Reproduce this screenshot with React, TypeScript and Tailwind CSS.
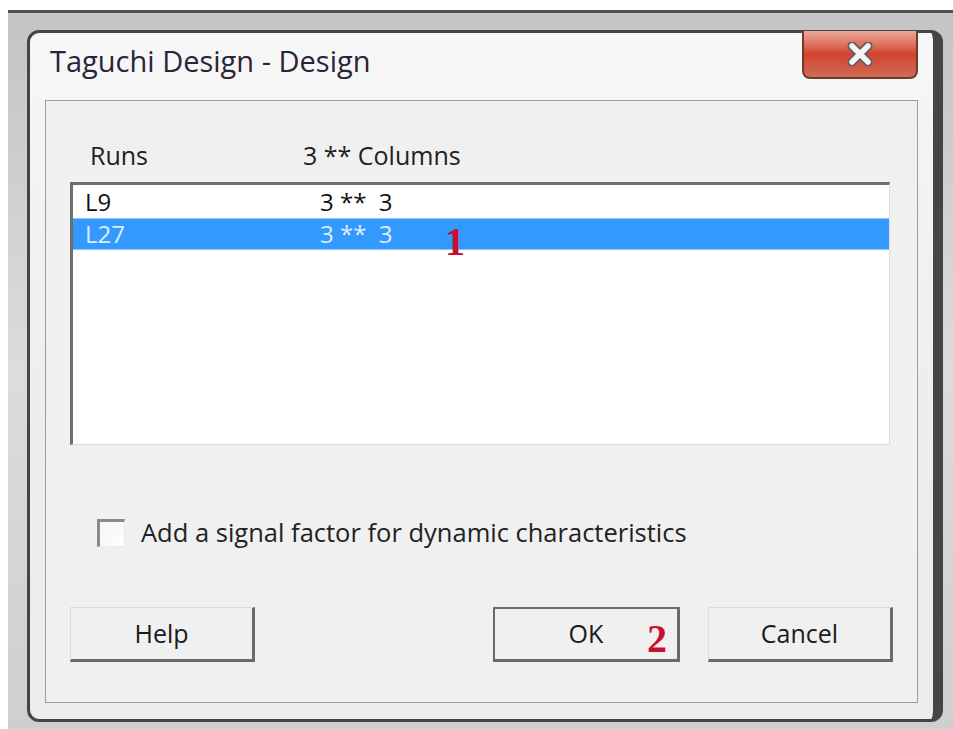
import React from "react";

// Minitab-style "Taguchi Design - Design" dialog, Windows 7 classic look

const rows = [
  { runs: "L9", columns: "3 **  3", selected: false },
  { runs: "L27", columns: "3 **  3", selected: true },
];

const marker = { fontFamily: '"Liberation Serif", serif' };

function CloseButton() {
  return (
    <div className="absolute -top-[2px] right-[15px] w-[116px] h-[48px] rounded-b-[8px] border-2 border-t-0 border-[#6e3a32] bg-gradient-to-b from-[#eaa99a] via-[#d2432c] to-[#cf6a56] flex items-center justify-center">
      <svg width="30" height="24" viewBox="0 0 30 24">
        <path
          d="M7 4 L23 20 M23 4 L7 20"
          stroke="#5e5e5e"
          strokeWidth="9"
          strokeLinecap="round"
        />
        <path
          d="M7 4 L23 20 M23 4 L7 20"
          stroke="#f4f4f4"
          strokeWidth="5.5"
          strokeLinecap="round"
        />
      </svg>
    </div>
  );
}

function Button({
  label,
  isDefault,
  width,
  children,
}: {
  label: string;
  isDefault?: boolean;
  width: string;
  children?: React.ReactNode;
}) {
  return (
    <div
      className={`relative h-[55px] ${width} flex items-center justify-center bg-[#f0f0f0] text-[25px] text-[#1a1a1a] ${
        isDefault
          ? "border-2 border-[#6a6a6a] border-b-[3px] border-r-[3px]"
          : "border-t border-l border-[#dcdcdc] border-b-[3px] border-r-[3px] border-b-[#6a6a6a] border-r-[#6a6a6a]"
      }`}
    >
      {label}
      {children}
    </div>
  );
}

export default function App() {
  return (
    <div
      className="w-[953px] h-[729px] bg-white overflow-hidden"
      style={{ fontFamily: '"Open Sans", "Noto Sans", sans-serif' }}
    >
      {/* window behind the dialog */}
      <div className="mt-[10px] ml-[8px] h-[719px] border-t-[3px] border-[#505050] bg-gradient-to-b from-[#c4c4c4] via-[#dcdcdc] to-[#cfcfcf] pt-[17px] pl-[19px] pr-[10px] pb-[7px]">
        <div className="relative h-[692px] w-[916px] rounded-[12px] border-[3px] border-r-[10px] border-[#454545] bg-gradient-to-b from-[#f7f7f7] via-[#eeeeee] to-[#ececec] flex flex-col">
          {/* title bar */}
          <div className="h-[67px] pl-[20px] pt-[13px] text-[29px] text-[#2a2438] leading-none">
            Taguchi Design - Design
          </div>
          <CloseButton />

          {/* client area */}
          <div className="mx-[15px] h-[603px] border border-[#9c9c9c] bg-[#f0f0f0] px-[24px] flex flex-col">
            <div className="flex text-[25px] text-[#222] leading-none mt-[42px] h-[39px]">
              <span className="ml-[20px] w-[213px]">Runs</span>
              <span>3 ** Columns</span>
            </div>

            {/* list box */}
            <div className="h-[263px] w-[820px] border-t-[3px] border-l-[3px] border-[#6e6e6e] border-b border-r border-b-[#dcdcdc] border-r-[#dcdcdc] bg-white pt-[1px]">
              {rows.map((r) => (
                <div
                  key={r.runs}
                  className={`relative h-[32px] flex items-center text-[24px] leading-none ${
                    r.selected
                      ? "bg-[#3399ff] text-[#dcefff] border-t border-b border-[#8cc4ff]"
                      : "text-[#111]"
                  }`}
                >
                  <span className="ml-[12px] w-[235px]">{r.runs}</span>
                  <span className="whitespace-pre">{r.columns}</span>
                  {r.selected && (
                    <span
                      className="absolute left-[372px] top-[3px] text-[40px] font-bold text-[#c8102e] leading-none"
                      style={marker}
                    >
                      1
                    </span>
                  )}
                </div>
              ))}
            </div>

            {/* signal factor option */}
            <div className="mt-[74px] ml-[27px] flex items-center h-[28px]">
              <div className="w-[28px] h-[28px] border-t-[3px] border-l-[3px] border-[#8a8a8a] border-b border-r border-b-[#e8e8e8] border-r-[#e8e8e8] bg-gradient-to-br from-[#f4f4f4] to-white" />
              <span className="ml-[16px] text-[25.5px] text-[#222] leading-none">
                Add a signal factor for dynamic characteristics
              </span>
            </div>

            {/* buttons */}
            <div className="mt-[60px] flex">
              <Button label="Help" width="w-[185px]" />
              <div className="flex-1" />
              <Button label="OK" isDefault width="w-[187px]">
                <span
                  className="absolute right-[10px] top-[10px] text-[40px] font-bold text-[#c8102e] leading-none"
                  style={marker}
                >
                  2
                </span>
              </Button>
              <div className="w-[28px]" />
              <Button label="Cancel" width="w-[185px]" />
            </div>
          </div>
        </div>
      </div>
    </div>
  );
}
